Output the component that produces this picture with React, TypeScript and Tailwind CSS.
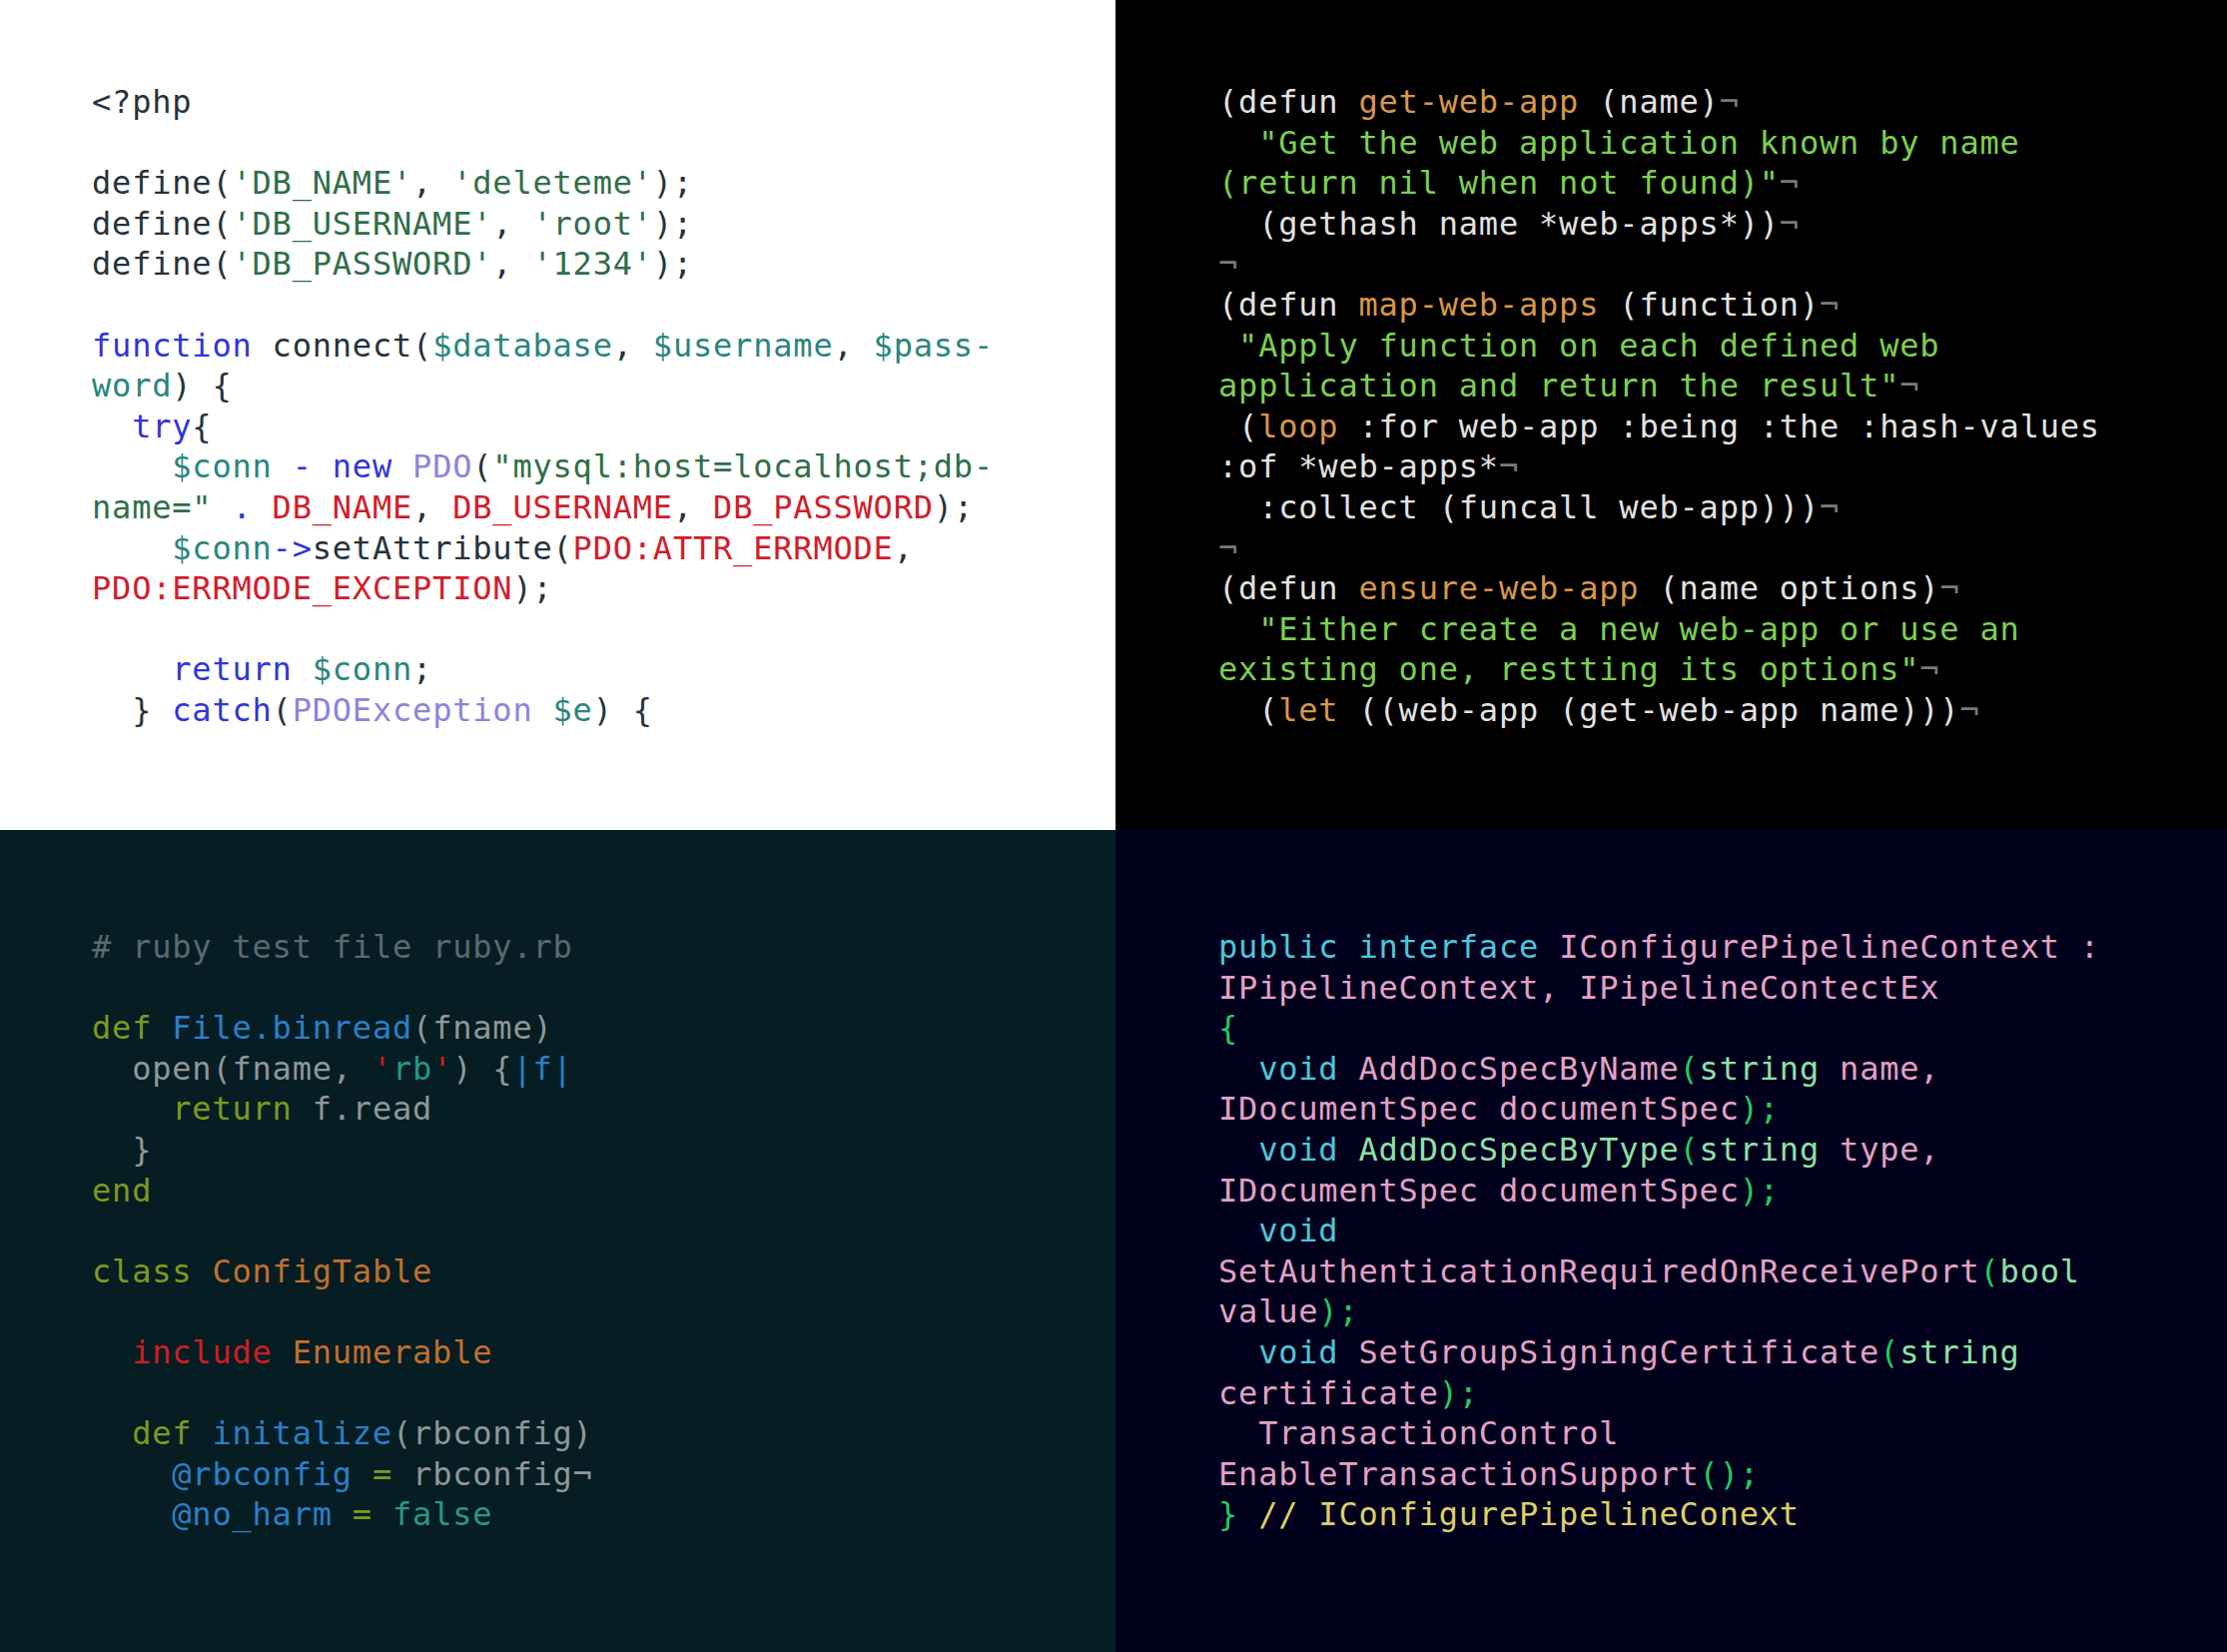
import React from "react";

type Seg = [string, string];

const Line = ({ segs }: { segs: Seg[] }) => (
  <div className="h-[40.6px] whitespace-pre leading-[40.6px]">
    {segs.length === 0 ? " " : segs.map((s, i) => (
      <span key={i} className={s[1]}>
        {s[0]}
      </span>
    ))}
  </div>
);

const Code = ({ lines }: { lines: Seg[][] }) => (
  <div className="font-['DejaVu_Sans_Mono',monospace] text-[32px] tracking-[0.8px]">
    {lines.map((l, i) => (
      <Line key={i} segs={l} />
    ))}
  </div>
);

// top-left colors
const D = "text-[#26323c]";
const S = "text-[#2f6e48]";
const K = "text-[#2f36d8]";
const V = "text-[#2a8580]";
const C = "text-[#8c84de]";
const R = "text-[#d21d2b]";

const php: Seg[][] = [
  [["<?php", D]],
  [],
  [["define(", D], ["'DB_NAME'", S], [", ", D], ["'deleteme'", S], [");", D]],
  [["define(", D], ["'DB_USERNAME'", S], [", ", D], ["'root'", S], [");", D]],
  [["define(", D], ["'DB_PASSWORD'", S], [", ", D], ["'1234'", S], [");", D]],
  [],
  [["function", K], [" connect(", D], ["$database", V], [", ", D], ["$username", V], [", ", D], ["$pass-", V]],
  [["word", V], [") {", D]],
  [["  try", K], ["{", D]],
  [["    $conn", V], [" - new ", K], ["PDO", C], ["(", D], ["\"mysql:host=localhost;db-", S]],
  [["name=\"", S], [" . ", K], ["DB_NAME", R], [", ", D], ["DB_USERNAME", R], [", ", D], ["DB_PASSWORD", R], [");", D]],
  [["    $conn", V], ["->", K], ["setAttribute(", D], ["PDO:ATTR_ERRMODE", R], [",", D]],
  [["PDO:ERRMODE_EXCEPTION", R], [");", D]],
  [],
  [["    return ", K], ["$conn", V], [";", D]],
  [["  } ", D], ["catch", K], ["(", D], ["PDOException", C], [" $e", V], [") {", D]],
];

// top-right colors
const W = "text-[#e2e2e2]";
const O = "text-[#d8964a]";
const G = "text-[#7ccf52]";
const N = "text-[#7a7a7a]";

const lisp: Seg[][] = [
  [["(defun ", W], ["get-web-app", O], [" (name)", W], ["¬", N]],
  [["  \"Get the web application known by name", G]],
  [["(return nil when not found)\"", G], ["¬", N]],
  [["  (gethash name *web-apps*))", W], ["¬", N]],
  [["¬", N]],
  [["(defun ", W], ["map-web-apps", O], [" (function)", W], ["¬", N]],
  [[" \"Apply function on each defined web", G]],
  [["application and return the result\"", G], ["¬", N]],
  [[" (", W], ["loop", O], [" :for web-app :being :the :hash-values", W]],
  [[":of *web-apps*", W], ["¬", N]],
  [["  :collect (funcall web-app)))", W], ["¬", N]],
  [["¬", N]],
  [["(defun ", W], ["ensure-web-app", O], [" (name options)", W], ["¬", N]],
  [["  \"Either create a new web-app or use an", G]],
  [["existing one, restting its options\"", G], ["¬", N]],
  [["  (", W], ["let", O], [" ((web-app (get-web-app name)))", W], ["¬", N]],
];

// bottom-left colors
const CM = "text-[#5a6a70]";
const OL = "text-[#7f991d]";
const BL = "text-[#2b7fc8]";
const GR = "text-[#8e9899]";
const RD = "text-[#cc1f24]";
const TL = "text-[#279887]";
const OR = "text-[#c0702c]";

const ruby: Seg[][] = [
  [["# ruby test file ruby.rb", CM]],
  [],
  [["def ", OL], ["File.binread", BL], ["(fname)", GR]],
  [["  open(fname, ", GR], ["'", RD], ["rb", TL], ["'", RD], [") {", GR], ["|f|", BL]],
  [["    return ", OL], ["f.read", GR]],
  [["  }", GR]],
  [["end", OL]],
  [],
  [["class ", OL], ["ConfigTable", OR]],
  [],
  [["  include ", RD], ["Enumerable", OR]],
  [],
  [["  def ", OL], ["initalize", BL], ["(rbconfig)", GR]],
  [["    @rbconfig", BL], [" = ", OL], ["rbconfig", GR], ["¬", GR]],
  [["    @no_harm", BL], [" = ", OL], ["false", TL]],
];

// bottom-right colors
const CY = "text-[#4cc6d8]";
const PK = "text-[#e3a1c2]";
const GN = "text-[#22cc5c]";
const LG = "text-[#8fe0a4]";
const YL = "text-[#ddd066]";

const cs: Seg[][] = [
  [["public interface ", CY], ["IConfigurePipelineContext :", PK]],
  [["IPipelineContext, IPipelineContectEx", PK]],
  [["{", GN]],
  [["  void ", CY], ["AddDocSpecByName", PK], ["(", GN], ["string", LG], [" name,", PK]],
  [["IDocumentSpec documentSpec", PK], [");", GN]],
  [["  void ", CY], ["AddDocSpecByType", LG], ["(", GN], ["string", LG], [" type,", PK]],
  [["IDocumentSpec documentSpec", PK], [");", GN]],
  [["  void", CY]],
  [["SetAuthenticationRequiredOnReceivePort", PK], ["(", GN], ["bool", LG]],
  [["value", PK], [");", GN]],
  [["  void ", CY], ["SetGroupSigningCertificate", PK], ["(", GN], ["string", LG]],
  [["certificate", PK], [");", GN]],
  [["  TransactionControl", PK]],
  [["EnableTransactionSupport", PK], ["();", GN]],
  [["} ", GN], ["// IConfigurePipelineConext", YL]],
];

export default function App() {
  return (
    <div className="grid h-[1654px] w-[2230px] grid-cols-[1117px_1113px] grid-rows-[831px_823px] overflow-hidden">
      <div className="bg-white pl-[92px] pt-[82px]">
        <Code lines={php} />
      </div>
      <div className="bg-black pl-[103px] pt-[82px]">
        <Code lines={lisp} />
      </div>
      <div className="bg-[#061d23] pl-[92px] pt-[97px]">
        <Code lines={ruby} />
      </div>
      <div className="bg-[#01011e] pl-[103px] pt-[97px]">
        <Code lines={cs} />
      </div>
    </div>
  );
}
